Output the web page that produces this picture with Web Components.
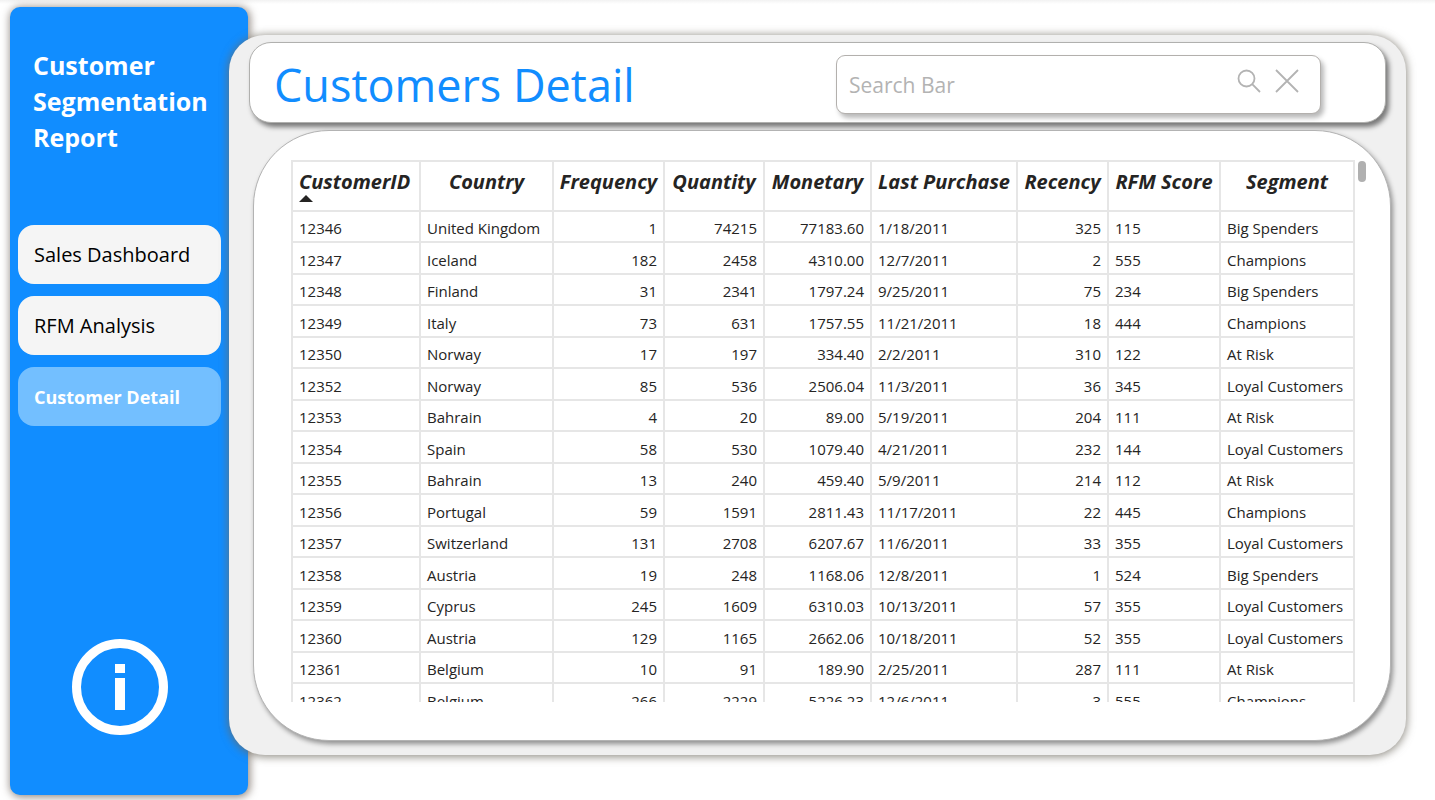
<!DOCTYPE html>
<html lang="en">
<head>
<meta charset="utf-8">
<title>Customer Segmentation Report</title>
<style>
html, body { margin: 0; height: 100%; }
body { font-family: "Open Sans", "Noto Sans", sans-serif; color: #252423; background: #fff linear-gradient(#f2f2f2, #fff) 0 0 / 100% 4px no-repeat; }
</style>
</head>
<body>
<report-app></report-app>
<script>
class ReportApp extends HTMLElement {
  constructor() {
    super();
    this.attachShadow({ mode: 'open' }).innerHTML = `
      <style>
        :host { display: flex; box-sizing: border-box; height: 100vh; min-height: 600px; padding: 7px 29px 5px 10px; }
      </style>
      <report-sidebar>
        <span slot="title">Customer Segmentation Report</span>
        <nav-item>Sales Dashboard</nav-item>
        <nav-item>RFM Analysis</nav-item>
        <nav-item active>Customer Detail</nav-item>
      </report-sidebar>
      <report-page>
        <page-header slot="header">Customers Detail<search-box slot="tools"></search-box></page-header>
        <customer-table></customer-table>
      </report-page>`;
  }
}

class ReportSidebar extends HTMLElement {
  constructor() {
    super();
    this.attachShadow({ mode: 'open' }).innerHTML = `
      <style>
        :host { display: flex; flex-direction: column; box-sizing: border-box; flex: 0 0 238px; padding: 40px 27px 60px 8px; background: #118dff; border-radius: 10px; box-shadow: 1px 1px 8px 1px rgba(70, 55, 45, .6); }
        h2 { margin: 0 0 70px 15px; font-size: 25px; line-height: 36px; font-weight: 700; color: #fff; }
        nav { display: flex; flex-direction: column; gap: 12px; }
        button { margin: auto auto 0 54px; padding: 0; border: 0; background: none; cursor: pointer; line-height: 0; }
      </style>
      <h2><slot name="title"></slot></h2>
      <nav aria-label="Report pages"><slot></slot></nav>
      <button type="button" aria-label="Information">
        <svg width="96" height="96" viewBox="0 0 96 96" fill="#fff"><circle cx="48" cy="48" r="43.5" fill="none" stroke="#fff" stroke-width="9"/><rect x="43" y="25" width="10" height="9"/><rect x="43" y="39" width="10" height="32"/></svg>
      </button>`;
  }
}

class NavItem extends HTMLElement {
  constructor() {
    super();
    this.attachShadow({ mode: 'open' }).innerHTML = `
      <style>
        :host { display: block; }
        a { display: flex; align-items: center; box-sizing: border-box; height: 59px; padding: 0 16px; border-radius: 16px; background: #f5f5f5; color: #000; font-size: 20px; line-height: 28px; white-space: nowrap; text-decoration: none; }
        :host([active]) a { background: #73bfff; color: #fff; font-size: 18px; font-weight: 700; }
      </style>
      <a href="#"><slot></slot></a>`;
  }
}

class ReportPage extends HTMLElement {
  constructor() {
    super();
    this.attachShadow({ mode: 'open' }).innerHTML = `
      <style>
        :host { display: flex; flex-direction: column; gap: 7px; box-sizing: border-box; flex: 1; min-width: 0; margin: 28px 0 40px -19px; padding: 7px 15px 14px 20px; background: #f0f0f0; border-radius: 36px; box-shadow: 0 1px 8px 1px rgba(110, 105, 95, .75); }
        main { display: flex; flex: 1; min-height: 0; box-sizing: border-box; margin-left: 4px; padding: 29px 24px 38px 37px; background: #fff; border: 1px solid #b3b3b3; border-radius: 76px; box-shadow: 2px 3px 5px rgba(0, 0, 0, .4); }
      </style>
      <slot name="header"></slot>
      <main><slot></slot></main>`;
  }
}

class PageHeader extends HTMLElement {
  constructor() {
    super();
    this.attachShadow({ mode: 'open' }).innerHTML = `
      <style>
        :host { display: flex; align-items: center; justify-content: space-between; box-sizing: border-box; flex: 0 0 81px; margin-right: 5px; padding: 4px 64px 0 24px; background: #fff; border: 1px solid #b0b0ae; border-radius: 22px; box-shadow: 3px 4px 5px rgba(0, 0, 0, .5); }
        h1 { margin: 0; font-size: 45px; line-height: 64px; font-weight: 400; color: #118dff; white-space: nowrap; }
        slot[name] { display: block; flex: 0 1 485px; }
      </style>
      <h1><slot></slot></h1>
      <slot name="tools"></slot>`;
  }
}

class SearchBox extends HTMLElement {
  constructor() {
    super();
    this.attachShadow({ mode: 'open' }).innerHTML = `
      <style>
        :host { display: block; }
        form { display: flex; align-items: center; gap: 14px; box-sizing: border-box; height: 59px; padding: 0 21px 0 12px; background: #fff; border: 1px solid #b3b0ad; border-radius: 9px; box-shadow: 3px 4px 5px rgba(0, 0, 0, .28); }
        input { flex: 1; min-width: 0; padding: 0; border: 0; outline: 0; background: none; font: 21px/30px "Open Sans", "Noto Sans", sans-serif; color: #252423; }
        input::placeholder { color: #b3b3b3; opacity: 1; }
        button { padding: 0 0 8px; border: 0; background: none; line-height: 0; cursor: pointer; }
        svg { fill: none; stroke: #b3b3b3; stroke-width: 1.8; }
      </style>
      <form role="search">
        <input type="text" placeholder="Search Bar" aria-label="Search Bar">
        <button type="button" aria-label="Search"><svg width="24" height="24" viewBox="0 0 24 24"><circle cx="9.500" cy="9.500" r="8"/><path d="M15.200 15.200L23 23"/></svg></button>
        <button type="button" aria-label="Clear"><svg width="24" height="24" viewBox="0 0 24 24"><path d="M1 1L23 23M23 1L1 23"/></svg></button>
      </form>`;
  }
}

const columns = [
  ['CustomerID', 128], ['Country', 133], ['Frequency', 111, 1], ['Quantity', 100, 1], ['Monetary', 107, 1],
  ['Last Purchase', 146], ['Recency', 91, 1], ['RFM Score', 112], ['Segment', 134]
];
const customers = [
  '12346|United Kingdom|1|74215|77183.60|1/18/2011|325|115|Big Spenders',
  '12347|Iceland|182|2458|4310.00|12/7/2011|2|555|Champions',
  '12348|Finland|31|2341|1797.24|9/25/2011|75|234|Big Spenders',
  '12349|Italy|73|631|1757.55|11/21/2011|18|444|Champions',
  '12350|Norway|17|197|334.40|2/2/2011|310|122|At Risk',
  '12352|Norway|85|536|2506.04|11/3/2011|36|345|Loyal Customers',
  '12353|Bahrain|4|20|89.00|5/19/2011|204|111|At Risk',
  '12354|Spain|58|530|1079.40|4/21/2011|232|144|Loyal Customers',
  '12355|Bahrain|13|240|459.40|5/9/2011|214|112|At Risk',
  '12356|Portugal|59|1591|2811.43|11/17/2011|22|445|Champions',
  '12357|Switzerland|131|2708|6207.67|11/6/2011|33|355|Loyal Customers',
  '12358|Austria|19|248|1168.06|12/8/2011|1|524|Big Spenders',
  '12359|Cyprus|245|1609|6310.03|10/13/2011|57|355|Loyal Customers',
  '12360|Austria|129|1165|2662.06|10/18/2011|52|355|Loyal Customers',
  '12361|Belgium|10|91|189.90|2/25/2011|287|111|At Risk',
  '12362|Belgium|266|2229|5226.23|12/6/2011|3|555|Champions'
].map(line => line.split('|'));

class CustomerTable extends HTMLElement {
  constructor() {
    super();
    const num = i => columns[i][2] ? ' class="num"' : '';
    this.attachShadow({ mode: 'open' }).innerHTML = `
      <style>
        :host { display: flex; gap: 3px; flex: 1; min-width: 0; min-height: 0; }
        .view { flex: 1; min-width: 0; overflow: auto; scrollbar-width: none; }
        .thumb { flex: 0 0 8px; height: 21px; margin-top: 1px; border-radius: 4px; background: #b0b0b0; }
        table { width: 100%; table-layout: fixed; border-collapse: collapse; font-size: 15px; line-height: 20px; }
        th, td { box-sizing: border-box; border: 2px solid #e6e6e6; padding: 3px 6px 0; text-align: left; white-space: nowrap; }
        th { height: 50px; padding: 7px 2px 0; vertical-align: top; text-align: center; font-size: 20px; line-height: 26px; font-weight: 700; font-style: italic; }
        th[aria-sort] { padding-left: 6px; text-align: left; }
        th svg { display: block; fill: #252423; }
        tr { height: 31px; }
        tbody tr:nth-child(even) { height: 32px; }
        .num { text-align: right; }
        th.num { text-align: center; }
      </style>
      <div class="view" tabindex="0">
        <table>
          <colgroup>${columns.map(c => `<col style="width:${c[1]}px">`).join('')}</colgroup>
          <thead><tr>${columns.map((c, i) => `<th scope="col"${num(i)}${i ? '' : ' aria-sort="ascending"'}>${c[0]}${i ? '' : '<svg width="14" height="7" viewBox="0 0 14 7"><path d="M0 7L7 0L14 7Z"/></svg>'}</th>`).join('')}</tr></thead>
          <tbody>${customers.map(r => `<tr>${r.map((v, i) => `<td${num(i)}>${v}</td>`).join('')}</tr>`).join('')}</tbody>
        </table>
      </div>
      <div class="thumb"></div>`;
  }
}

customElements.define('nav-item', NavItem);
customElements.define('report-sidebar', ReportSidebar);
customElements.define('search-box', SearchBox);
customElements.define('page-header', PageHeader);
customElements.define('customer-table', CustomerTable);
customElements.define('report-page', ReportPage);
customElements.define('report-app', ReportApp);
</script>
</body>
</html>
